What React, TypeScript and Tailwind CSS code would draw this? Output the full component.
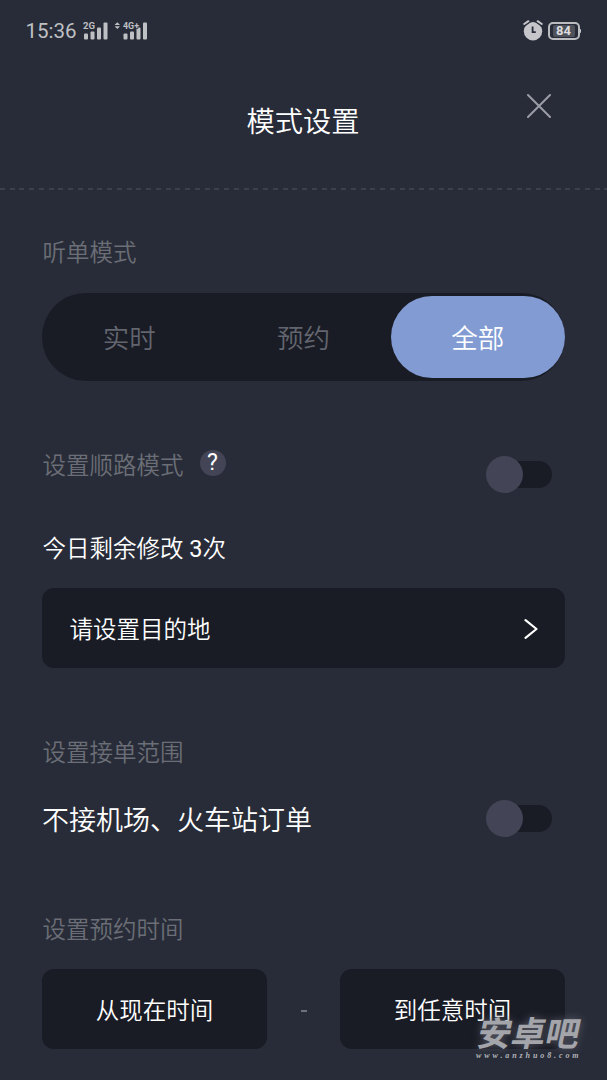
import { useState } from "react";
import type { ReactNode } from "react";

const modes = ["实时", "预约", "全部"];

const SignalBars = () => (
  <g fill="#bfc0c4">
    <rect x="1" y="14.5" width="4" height="6" rx="1" />
    <rect x="7.5" y="12.5" width="4" height="8" rx="1" />
    <rect x="14" y="8.5" width="4" height="12" rx="1" />
    <rect x="20.5" y="3.5" width="4" height="17" rx="1" />
  </g>
);

const StatusBar = () => {
  return (
    <div className="flex h-15 items-center justify-between pl-[25.5px] pr-[26px] pt-px text-[#bfc0c4]">
      <div className="flex items-center">
        <span className="w-[57px] pt-px text-[20.5px] font-normal leading-6">15:36</span>
        <svg className="overflow-visible" width="26" height="24" viewBox="0 0 26 24">
          <SignalBars />
          <text x="0" y="9.9" fontSize="9.5" fontWeight="700" fill="#bfc0c4" stroke="#282c38" strokeWidth="1.5" paintOrder="stroke" textLength="12" lengthAdjust="spacingAndGlyphs">
            2G
          </text>
        </svg>
        <svg className="ml-[5px] overflow-visible" width="35" height="24" viewBox="0 0 35 24">
          <path d="M3.3 3.3 6 6.1H0.6ZM3.3 10 6 7.2H0.6Z" fill="#bfc0c4" />
          <g transform="translate(8.5)">
            <SignalBars />
          </g>
          <text x="9" y="9.9" fontSize="9.5" fontWeight="700" fill="#bfc0c4" stroke="#282c38" strokeWidth="1.5" paintOrder="stroke" textLength="16" lengthAdjust="spacingAndGlyphs">
            4G+
          </text>
        </svg>
      </div>
      <div className="flex items-center gap-[5px]">
        <svg width="20" height="21" viewBox="0 0 20 21" fill="none">
          <circle cx="10" cy="11.3" r="9.2" fill="#c6c6ca" />
          <path d="M1.2 4.2 5.4 1.2M18.8 4.2 14.6 1.2" stroke="#282c38" strokeWidth="4.5" strokeLinecap="round" />
          <path d="M1.2 4 5.4 1.2M18.8 4 14.6 1.2" stroke="#c6c6ca" strokeWidth="2" strokeLinecap="round" />
          <path d="M9.6 6.5v5.6h3.2" stroke="#282c38" strokeWidth="1.8" />
        </svg>
        <div className="flex items-center">
          <div className="flex h-[18px] w-8 items-center justify-center rounded-[5px] border-2 border-[#bbbcc0]">
            <span className="flex h-3 w-[22px] items-center justify-center rounded-xs bg-[#50525b] text-[13px] font-bold leading-3 text-[#dcdcde]">
              84
            </span>
          </div>
          <span className="h-1 w-[1.5px] rounded-r-sm bg-[#c6c6ca]" />
        </div>
      </div>
    </div>
  );
};

const Label = ({ children }: { children: ReactNode }) => (
  <h2 className="h-6 pt-px pl-[0.5px] text-[23.5px] font-[350] leading-6 text-[#6b6e76]">{children}</h2>
);

const Toggle = () => {
  const [on, setOn] = useState(false);
  return (
    <button
      role="switch"
      aria-checked={on}
      onClick={() => setOn(!on)}
      className={`mr-[13px] flex h-[37px] w-[66px] items-center ${on ? "justify-end" : "justify-start"}`}
    >
      <span className="-mr-[31px] size-[37px] shrink-0 rounded-full bg-[#434556] z-10" />
      <span className="h-[27px] w-[60px] rounded-full bg-[#191b25]" />
    </button>
  );
};

const TimeButton = ({ text }: { text: string }) => (
  <button className="h-[80px] w-[225px] rounded-xl bg-[#191b25] pt-[3px] text-[23.5px] leading-6 text-white">
    {text}
  </button>
);

const App = () => {
  const [mode, setMode] = useState("全部");

  return (
    <div className="relative h-[1080px] w-[607px] overflow-hidden bg-[#282c38] font-['Roboto','Noto_Sans_CJK_SC',sans-serif] font-[350] text-white">
      <StatusBar />
      <header className="flex h-32 justify-between pl-[55px] pr-14">
        <span className="w-6" />
        <h1 className="pt-[49px] text-[28.3px] leading-7">模式设置</h1>
        <button aria-label="close" className="mt-[34px] size-6">
          <svg width="24" height="24" viewBox="0 0 24 24" stroke="#9b9da6" strokeWidth="2" strokeLinecap="round">
            <path d="M1 1 23 23M23 1 1 23" />
          </svg>
        </button>
      </header>
      <div className="-mb-px h-[2px] bg-[repeating-linear-gradient(90deg,#3c404b_0px,#3c404b_4.8px,transparent_4.8px,transparent_9.75px)]" />

      <main className="px-[42px] pt-[51px]">
        <Label>听单模式</Label>
        <div className="mt-[29px] flex h-[88px] items-center rounded-full bg-[#191b25]">
          {modes.map((item) => (
            <button
              key={item}
              onClick={() => setMode(item)}
              className={`h-[82px] flex-1 rounded-full pt-[3px] text-[26.5px] leading-7 ${
                item === mode ? "bg-[#829cd3] text-white" : "text-[#62656e]"
              }`}
            >
              {item}
            </button>
          ))}
        </div>

        <div className="mt-[72px] flex h-10 justify-between">
          <div className="flex">
            <Label>设置顺路模式</Label>
            <span className="-mt-[3px] ml-4 flex size-[26px] items-center justify-center rounded-full bg-[#434556] text-[23px] font-normal leading-6">
              ?
            </span>
          </div>
          <div className="self-end">
            <Toggle />
          </div>
        </div>
        <p className="mt-[43px] h-6 pl-[0.5px] pt-px text-[23.5px] leading-6">
          今日剩余修改 <span className="font-normal">3</span>次
        </p>
        <button className="mt-7 flex h-[80px] w-full items-center justify-between rounded-xl bg-[#191b25] pl-[27.5px] pr-[27px] pt-[2px] text-[23.5px] leading-6">
          <span className="pt-[2px]">请设置目的地</span>
          <svg width="14" height="20" viewBox="0 0 14 20" fill="none" stroke="#fff" strokeWidth="2.2" strokeLinecap="round" strokeLinejoin="round">
            <path d="M1.5 1.2 12.5 10 1.5 18.8" />
          </svg>
        </button>

        <div className="mt-[72px]">
          <Label>设置接单范围</Label>
        </div>
        <div className="mt-[35px] flex h-[38px] items-center justify-between">
          <span className="pt-[5px] text-[27px] leading-7">不接机场、火车站订单</span>
          <Toggle />
        </div>

        <div className="mt-20">
          <Label>设置预约时间</Label>
        </div>
        <div className="mt-7 flex items-center justify-between">
          <TimeButton text="从现在时间" />
          <span className="mt-[4px] h-[2px] w-[6px] bg-[#6f727a]" />
          <TimeButton text="到任意时间" />
        </div>
      </main>

      <div className="absolute left-[476px] top-[1017px] w-[106px] text-[#a4a5aa]">
        <div className="-skew-x-12 whitespace-nowrap text-center text-[34px] font-bold leading-[34px] [text-shadow:0_0_8px_#5c5e69]">
          安卓吧
        </div>
        <div className="whitespace-nowrap pt-px font-['Liberation_Serif',serif] text-[8px] font-bold italic leading-2 tracking-[2.9px] text-[#b4b5ba]">
          www.anzhuo8.com
        </div>
      </div>
    </div>
  );
};

export default App;
